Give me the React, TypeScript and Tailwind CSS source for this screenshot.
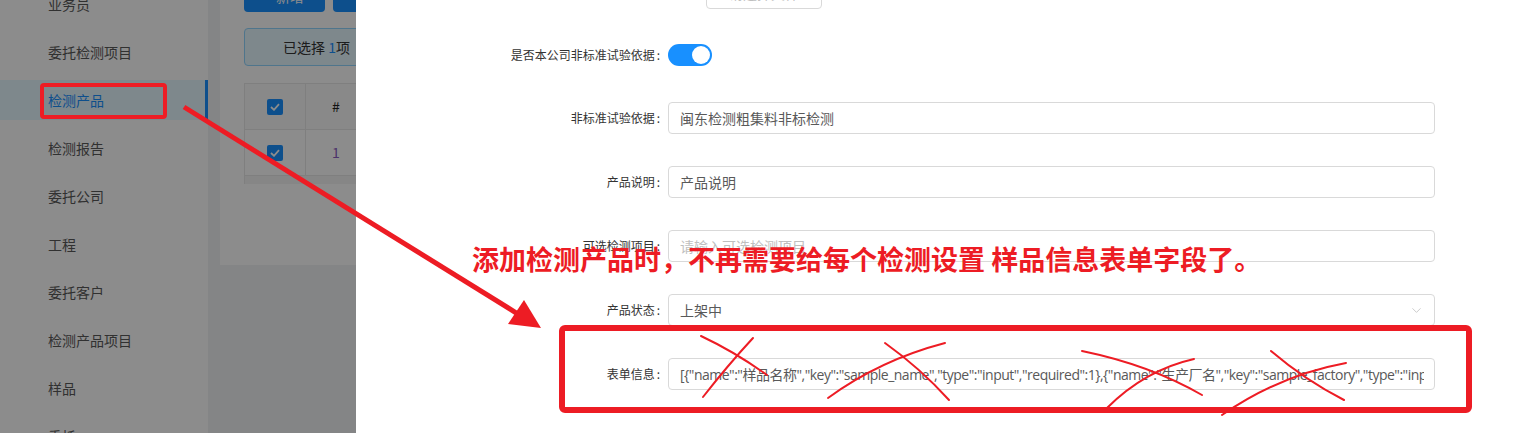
import React from "react";
import { ChevronDown } from "lucide-react";

const FONT = '"Open Sans", "Noto Sans CJK SC", sans-serif';
const CJK = '"Noto Sans CJK SC", "Noto Sans", sans-serif';

const menu = [
  "业务员",
  "委托检测项目",
  "检测产品",
  "检测报告",
  "委托公司",
  "工程",
  "委托客户",
  "检测产品项目",
  "样品",
  "委托",
];

function Check() {
  return (
    <div className="w-4 h-4 rounded-[2px] bg-[#1890ff] flex items-center justify-center">
      <svg width="10" height="8" viewBox="0 0 10 8">
        <path d="M1 4 L4 6.8 L9 1.2" fill="none" stroke="#fff" strokeWidth="1.8" />
      </svg>
    </div>
  );
}

function Label({ text }: { text: string }) {
  return (
    <div className="w-[312px] shrink-0 text-right text-[12px] text-[#333]" style={{ fontFamily: CJK }}>
      {text}
      <span className="ml-[2px] mr-[8px]">:</span>
    </div>
  );
}

function Field({
  label,
  value,
  placeholder,
  select,
  tight,
}: {
  label: string;
  value?: string;
  placeholder?: string;
  select?: boolean;
  tight?: boolean;
}) {
  return (
    <div className="flex items-center h-8">
      <Label text={label} />
      <div className="w-[767px] h-8 border border-[#d9d9d9] rounded-[4px] bg-white flex items-center pl-[11px] pr-[10px] overflow-hidden">
        <div
          className={`flex-1 whitespace-nowrap overflow-hidden text-[14px] ${placeholder ? "text-[#bfbfbf]" : "text-[#595959]"} ${tight ? "tracking-[-0.5px]" : ""}`}
          style={{ fontFamily: FONT }}
        >
          {value ?? placeholder}
        </div>
        {select && <ChevronDown size={15} strokeWidth={1.3} color="#bfbfbf" />}
      </div>
    </div>
  );
}

export default function App() {
  const json =
    '[{"name":"样品名称","key":"sample_name","type":"input","required":1},{"name":"生产厂名","key":"sample_factory","type":"input","required":1}]';
  return (
    <div className="relative w-[1521px] h-[433px] overflow-hidden bg-[#f0f2f5]" style={{ fontFamily: FONT }}>
      {/* page underneath */}
      <div className="flex h-full">
        <aside className="w-[208px] shrink-0 h-full bg-white overflow-hidden">
          <ul className="mt-[-16px] flex flex-col gap-2" style={{ fontFamily: CJK }}>
            {menu.map((m) => (
              <li
                key={m}
                className={
                  m === "检测产品"
                    ? "h-10 flex items-center pl-12 text-[14px] bg-[#e6f7ff] text-[#1890ff] border-r-[3px] border-[#1890ff]"
                    : "h-10 flex items-center pl-12 text-[14px] text-[#595959]"
                }
              >
                {m}
              </li>
            ))}
          </ul>
        </aside>
        <main className="flex-1 pl-3">
          <div className="h-[265px] bg-white overflow-hidden">
            <div className="px-6 mt-[-20px]" style={{ fontFamily: CJK }}>
              <div className="flex gap-2 h-8">
                <div className="w-[81px] h-8 rounded-[4px] bg-[#1890ff] text-white text-[14px] flex items-center justify-center">
                  + 新增
                </div>
                <div className="w-[81px] h-8 rounded-[4px] bg-[#1890ff] text-white text-[14px] flex items-center justify-center">
                  删除
                </div>
              </div>
              <div className="mt-4 h-[38px] border border-[#91d5ff] bg-[#e6f7ff] rounded-[4px] flex items-center pl-[38px] text-[14px] text-[#333]">
                已选择&nbsp;<span className="text-[#1890ff]">1</span>项
              </div>
              <div className="mt-[17px] border border-[#e8e8e8] border-b-0">
                <div className="flex h-[46px] bg-[#fafafa] border-b border-[#e8e8e8]">
                  <div className="w-[61px] flex items-center justify-center border-r border-[#e8e8e8]">
                    <Check />
                  </div>
                  <div className="w-[60px] flex items-center justify-center text-[14px] text-[#222]">#</div>
                </div>
                <div className="flex h-[46px] border-b border-[#e8e8e8]">
                  <div className="w-[61px] flex items-center justify-center border-r border-[#e8e8e8]">
                    <Check />
                  </div>
                  <div className="w-[60px] flex items-center justify-center text-[14px] text-[#8a5cc4]">1</div>
                </div>
                <div className="h-2 bg-[#f5f5f5]" />
              </div>
            </div>
          </div>
        </main>
      </div>

      {/* mask */}
      <div className="absolute inset-0 bg-black/45" />

      {/* drawer */}
      <div className="absolute top-0 right-0 bottom-0 w-[1165px] bg-white">
        <div className="mt-[-23px] h-8 flex">
          <div className="ml-[350px] w-[116px] h-8 border border-[#d9d9d9] rounded-[4px] flex items-center justify-center text-[14px] text-[#bfbfbf]" style={{ fontFamily: CJK }}>
            请选择文件
          </div>
        </div>
        <div className="mt-[35px] h-[22px] flex items-center">
          <Label text="是否本公司非标准试验依据" />
          <div className="w-[44px] h-[22px] rounded-full bg-[#1890ff] flex items-center justify-end pr-[2px]">
            <div className="w-[18px] h-[18px] rounded-full bg-white" />
          </div>
        </div>
        <div className="mt-9 flex flex-col gap-8">
          <Field label="非标准试验依据" value="闽东检测粗集料非标检测" />
          <Field label="产品说明" value="产品说明" />
          <Field label="可选检测项目" placeholder="请输入可选检测项目" />
          <Field label="产品状态" value="上架中" select />
          <Field label="表单信息" value={json} tight />
        </div>
      </div>

      {/* annotations */}
      <svg className="absolute inset-0 pointer-events-none" width="1521" height="433" viewBox="0 0 1521 433">
        <rect x="42" y="85" width="123" height="32" rx="2" fill="none" stroke="#ed1c24" strokeWidth="4" />
        <line x1="184" y1="107" x2="518" y2="314" stroke="#ed1c24" strokeWidth="5" />
        <polygon points="541,328 508,324 524,300" fill="#ed1c24" />
        <rect x="562" y="328" width="907" height="82" rx="3" fill="none" stroke="#ed1c24" strokeWidth="6" />
        <g fill="none" stroke="#ed1c24" strokeWidth="2" strokeLinecap="round">
          <path d="M701 336 Q735 352 767 375" />
          <path d="M753 338 Q728 365 703 397" />
          <path d="M885 343 Q920 368 949 400" />
          <path d="M828 398 Q880 360 945 343" />
          <path d="M1082 351 Q1150 365 1202 395" />
          <path d="M1107 408 Q1145 370 1194 359" />
          <path d="M1271 351 Q1305 380 1344 400" />
          <path d="M1222 415 Q1280 375 1346 363" />
        </g>
      </svg>
      <div
        className="absolute left-[472px] top-[245px] text-[27px] leading-none font-bold text-[#ed1c24] whitespace-nowrap"
        style={{ fontFamily: CJK }}
      >
        添加检测产品时，不再需要给每个检测设置 样品信息表单字段了。
      </div>
    </div>
  );
}
